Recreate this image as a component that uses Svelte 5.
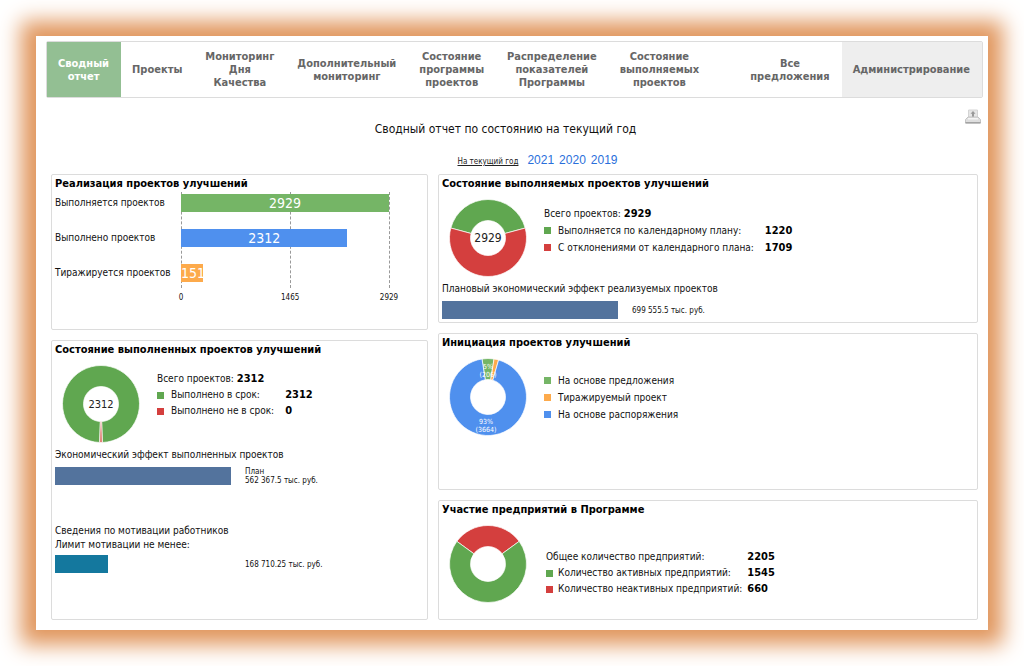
<script>
  const menu = [
    { lines: ["Сводный", "отчет"], active: true },
    { lines: ["Проекты"] },
    { lines: ["Мониторинг", "Дня", "Качества"] },
    { lines: ["Дополнительный", "мониторинг"] },
    { lines: ["Состояние", "программы", "проектов"] },
    { lines: ["Распределение", "показателей", "Программы"] },
    { lines: ["Состояние", "выполняемых", "проектов"] },
    { lines: ["Все", "предложения"], pushed: true },
    { lines: ["Администрирование"], admin: true },
  ];

  const years = [2021, 2020, 2019];

  const green = "#60a750";
  const lightGreen = "#75b566";
  const red = "#d43f3e";
  const blue = "#4f90ee";
  const orange = "#fdaa4b";

  const realization = [
    { label: "Выполняется проектов", value: 2929, width: 100, color: lightGreen },
    { label: "Выполнено проектов", value: 2312, width: 80, color: blue },
    { label: "Тиражируется проектов", value: 151, width: 10.5, color: orange },
  ];

  const ticks = [
    { value: 0, at: 0 },
    { value: 1465, at: 52.5 },
    { value: 2929, at: 100 },
  ];

  // from / to are degrees, clockwise from the top
  const inWork = [
    { from: -75, to: 75, color: green },
    { from: 75, to: 285, color: red },
  ];
  const finished = [
    { from: -178, to: 178, color: green },
    { from: 178, to: 182, color: "#dc7063" },
  ];
  const initiation = [
    { from: -9, to: 9, color: lightGreen },
    { from: 9, to: 16, color: orange },
    { from: 16, to: 351, color: blue },
  ];
  const companies = [
    { from: -54, to: 54, color: red },
    { from: 54, to: 306, color: green },
  ];

  function point(radius, deg) {
    const a = ((deg - 90) * Math.PI) / 180;
    return `${(39 + radius * Math.cos(a)).toFixed(2)} ${(39 + radius * Math.sin(a)).toFixed(2)}`;
  }

  function arc({ from, to }) {
    const large = to - from > 180 ? 1 : 0;
    return `M${point(38.5, from)} A38.5 38.5 0 ${large} 1 ${point(38.5, to)} L${point(17.5, to)} A17.5 17.5 0 ${large} 0 ${point(17.5, from)} Z`;
  }
</script>

{#snippet donut(slices, label, notes = [])}
  <svg class="donut" viewBox="0 0 78 78" role="img" aria-label="Диаграмма">
    {#each slices as slice}
      <path d={arc(slice)} fill={slice.color} stroke="#fff" stroke-width="0.7" />
    {/each}
    {#if label}
      <text class="total" x="39" y="43">{label}</text>
    {/if}
    {#each notes as note}
      <text class="note" x={note.x} y={note.y}>{note.text}</text>
    {/each}
  </svg>
{/snippet}

{#snippet legendRow(color, label, value)}
  <tr>
    <td class="mark"><span style="background: {color}"></span></td>
    <td>{label}</td>
    {#if value !== undefined}
      <td class="value">{value}</td>
    {/if}
  </tr>
{/snippet}

<div class="frame">
  <nav>
    {#each menu as item}
      <a
        href="#top"
        class:active={item.active}
        class:pushed={item.pushed}
        class:admin={item.admin}
      >
        {#each item.lines as line}
          <span>{line}</span>
        {/each}
      </a>
    {/each}
  </nav>

  <header>
    <h1>Сводный отчет по состоянию на текущий год</h1>
    <button class="print" aria-label="Печать">
      <svg viewBox="0 0 16 16" width="16" height="16">
        <path d="M3.500 1h9v8h-9z" fill="#e6e6e6" stroke="#d4d4d4" />
        <path d="M8 2l2.500 2.700H9V8H7V4.700H5.500z" fill="#999" />
        <path d="M3 8h10l2.500 2.500v3.500H.5v-3.500z" fill="#dedede" stroke="#c4c4c4" />
        <path d="M3 9h10v1.500H3z" fill="#f5f5f5" />
        <path d="M.5 13h15v1.500H.5z" fill="#a3a3a3" />
      </svg>
    </button>
  </header>

  <div class="years">
    <a class="current" href="#current">На текущий год</a>
    {#each years as year}
      <a href="#{year}">{year}</a>
    {/each}
  </div>

  <main>
    <div class="column">
      <section class="realization">
        <h2>Реализация проектов улучшений</h2>
        <div class="chart">
          <div class="labels">
            {#each realization as row}
              <span>{row.label}</span>
            {/each}
          </div>
          <div class="plot">
            {#each ticks as tick}
              <i style="left: {tick.at}%"></i>
              <small style="left: {tick.at}%">{tick.value}</small>
            {/each}
            {#each realization as row}
              <div class="bar" style="width: {row.width}%; background: {row.color}">
                {row.value}
              </div>
            {/each}
          </div>
        </div>
      </section>

      <section class="finished">
        <h2>Состояние выполненных проектов улучшений</h2>
        <div class="summary">
          {@render donut(finished, "2312")}
          <table>
            <tbody>
              <tr><td colspan="3">Всего проектов: <b>2312</b></td></tr>
              {@render legendRow(green, "Выполнено в срок:", 2312)}
              {@render legendRow(red, "Выполнено не в срок:", 0)}
            </tbody>
          </table>
        </div>
        <p>Экономический эффект выполненных проектов</p>
        <div class="effect">
          <div class="track"><div style="width: 100%; background: #53739d"></div></div>
          <span>План<br />562 367.5 тыс. руб.</span>
        </div>
        <p class="motivation">Сведения по мотивации работников<br />Лимит мотивации не менее:</p>
        <div class="effect">
          <div class="track"><div style="width: 30%; background: #14789e"></div></div>
          <span>168 710.25 тыс. руб.</span>
        </div>
      </section>
    </div>

    <div class="column wide">
      <section class="in-work">
        <h2>Состояние выполняемых проектов улучшений</h2>
        <div class="summary">
          {@render donut(inWork, "2929")}
          <table>
            <tbody>
              <tr><td colspan="3">Всего проектов: <b>2929</b></td></tr>
              {@render legendRow(green, "Выполняется по календарному плану:", 1220)}
              {@render legendRow(red, "С отклонениями от календарного плана:", 1709)}
            </tbody>
          </table>
        </div>
        <p>Плановый экономический эффект реализуемых проектов</p>
        <div class="effect">
          <div class="track"><div style="width: 100%; background: #53739d"></div></div>
          <span>699 555.5 тыс. руб.</span>
        </div>
      </section>

      <section class="initiation">
        <h2>Инициация проектов улучшений</h2>
        <div class="summary">
          {@render donut(initiation, "", [
            { x: 39, y: 11, text: "5%" },
            { x: 39, y: 19, text: "(206)" },
            { x: 37, y: 66, text: "93%" },
            { x: 37, y: 74, text: "(3664)" },
          ])}
          <table>
            <tbody>
              {@render legendRow(lightGreen, "На основе предложения")}
              {@render legendRow(orange, "Тиражируемый проект")}
              {@render legendRow(blue, "На основе распоряжения")}
            </tbody>
          </table>
        </div>
      </section>

      <section class="companies">
        <h2>Участие предприятий в Программе</h2>
        <div class="summary">
          {@render donut(companies)}
          <table>
            <tbody>
              <tr>
                <td colspan="2">Общее количество предприятий:</td>
                <td class="value">2205</td>
              </tr>
              {@render legendRow(green, "Количество активных предприятий:", 1545)}
              {@render legendRow(red, "Количество неактивных предприятий:", 660)}
            </tbody>
          </table>
        </div>
      </section>
    </div>
  </main>
</div>

<style>
  :global(body) {
    background: #fff;
  }

  .frame {
    margin: 36px;
    padding: 5px 5px 10px 10px;
    background: #fff;
    box-shadow: 0 0 20px 15px #e1975e;
    font-family: "DejaVu Sans Condensed", Tahoma, sans-serif;
    font-size: 10px;
    line-height: 16px;
    color: #111;
  }

  nav {
    display: flex;
    min-height: 55px;
    border: 1px solid #dcdcdc;
    border-radius: 2px;
  }

  nav a {
    display: flex;
    flex-direction: column;
    justify-content: center;
    padding: 0 12px 0 11px;
    font-size: 11px;
    font-weight: bold;
    line-height: 13px;
    text-align: center;
    text-decoration: none;
    color: #666;
  }

  nav .active {
    background: #93bf93;
    color: #fff;
  }

  nav .pushed {
    margin-left: auto;
  }

  nav .admin {
    background: #eee;
  }

  header {
    display: flex;
    align-items: flex-start;
    padding: 11px 2px 0 0;
  }

  h1 {
    flex: 1;
    margin: 10px 0 0;
    font-size: 12px;
    font-weight: normal;
    line-height: 20px;
    text-align: center;
  }

  .print {
    display: flex;
    padding: 0;
    border: none;
    background: none;
    cursor: pointer;
  }

  .years {
    display: flex;
    justify-content: center;
    align-items: baseline;
    gap: 5px;
    margin-top: 13px;
    padding-left: 46px;
    font-family: "Liberation Sans", Arial, sans-serif;
    font-size: 12px;
  }

  .years a {
    color: #2a6fdb;
    text-decoration: none;
  }

  .years .current {
    margin-right: 4px;
    font-family: "DejaVu Sans Condensed", Tahoma, sans-serif;
    font-size: 8px;
    color: #222;
    text-decoration: underline;
  }

  main {
    display: flex;
    gap: 10px;
    padding: 4px 5px 0;
  }

  .column {
    display: flex;
    flex: 377 1 0;
    flex-direction: column;
    gap: 10px;
    min-width: 0;
  }

  .wide {
    flex-grow: 540;
  }

  section {
    box-sizing: border-box;
    padding: 1px 3px 3px;
    border: 1px solid #dcdcdc;
    border-radius: 2px;
  }

  .realization {
    min-height: 156px;
  }

  .initiation {
    min-height: 157px;
  }

  .finished {
    flex: 1;
    min-height: 280px;
  }

  .companies {
    flex: 1;
  }

  h2 {
    margin: 0;
    font-size: 11px;
    line-height: 16px;
    color: #000;
  }

  .chart {
    display: flex;
    padding-right: 35px;
  }

  .labels {
    display: flex;
    flex: 0 0 126px;
    flex-direction: column;
    gap: 17px;
    padding-top: 2px;
    line-height: 18px;
    white-space: nowrap;
  }

  .plot {
    display: flex;
    position: relative;
    flex: 1;
    flex-direction: column;
    gap: 17px;
    height: 94px;
    padding-top: 2px;
  }

  /* dashed grid line with its number under it */
  .plot i {
    position: absolute;
    top: 0;
    bottom: 0;
    border-left: 1px dashed #999;
  }

  .plot small {
    position: absolute;
    top: 98px;
    font-size: 8px;
    transform: translateX(-50%);
  }

  .bar {
    position: relative;
    font-size: 14px;
    line-height: 18px;
    text-align: center;
    color: #fff;
  }

  .summary {
    display: flex;
    gap: 17px;
    padding: 7px 7px 4px;
  }

  .donut {
    flex: none;
    width: 78px;
    height: 78px;
  }

  .donut text {
    text-anchor: middle;
  }

  .total {
    font-size: 11px;
    fill: #222;
  }

  .in-work .total {
    font-size: 12px;
  }

  .note {
    font-size: 7px;
    fill: #fff;
  }

  table {
    align-self: flex-start;
    border-collapse: collapse;
  }

  td {
    padding: 0;
    white-space: nowrap;
  }

  .mark {
    width: 14px;
  }

  .mark span {
    display: block;
    width: 7px;
    height: 7px;
  }

  .value {
    padding-left: 11px;
    font-weight: bold;
  }

  b,
  .value {
    font-size: 11px;
    color: #000;
  }

  .in-work table,
  .finished table {
    margin-top: 6px;
  }

  .in-work table,
  .initiation table {
    line-height: 17px;
  }

  .initiation table {
    margin-top: 14px;
  }

  .companies table {
    margin: 24px 0 0 2px;
  }

  .companies .mark {
    width: 12px;
  }

  .companies .value {
    padding-left: 5px;
  }

  p {
    margin: 0 0 4px;
  }

  .motivation {
    margin: 39px 0 3px;
    line-height: 14px;
  }

  .effect {
    display: flex;
    align-items: center;
    gap: 14px;
    height: 18px;
    font-size: 8px;
    line-height: 9px;
  }

  .track {
    flex: 0 0 176px;
  }

  .track div {
    height: 18px;
  }
</style>
